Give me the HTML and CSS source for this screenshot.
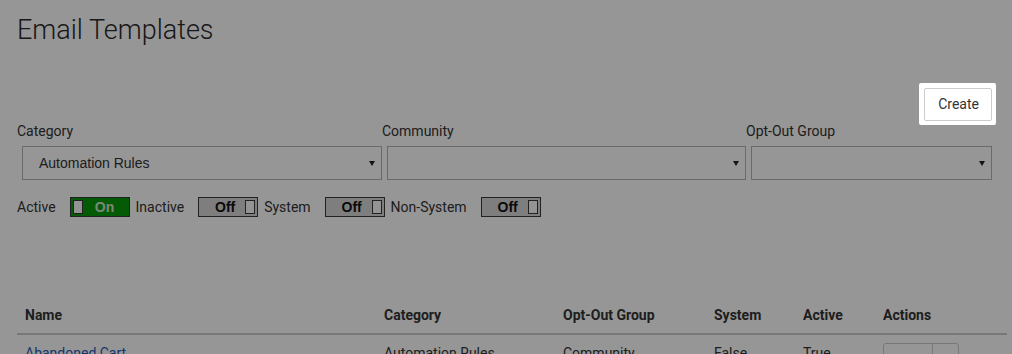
FILE: index.html
```html
<!DOCTYPE html>
<html lang="en">
<head>
<meta charset="utf-8">
<title>Email Templates</title>
<link rel="stylesheet" href="styles.css">
</head>
<body>
<div class="page">
  <h1 class="title">Email Templates</h1>

  <div class="toolbar">
    <div class="spot"><button class="btn" type="button">Create</button></div>
  </div>

  <div class="filters">
    <div class="field">
      <label class="label">Category</label>
      <div class="select"><span class="value">Automation Rules</span><svg class="caret" width="6" height="5" viewBox="0 0 6 5"><path d="M0 0H6L3 5Z"/></svg></div>
    </div>
    <div class="field">
      <label class="label">Community</label>
      <div class="select"><span class="value"></span><svg class="caret" width="6" height="5" viewBox="0 0 6 5"><path d="M0 0H6L3 5Z"/></svg></div>
    </div>
    <div class="field">
      <label class="label">Opt-Out Group</label>
      <div class="select"><span class="value"></span><svg class="caret" width="6" height="5" viewBox="0 0 6 5"><path d="M0 0H6L3 5Z"/></svg></div>
    </div>
  </div>

  <div class="switches">
    <span class="sw-label">Active</span>
    <span class="toggle on"><span class="knob"></span><span class="tx">On</span></span>
    <span class="sw-label">Inactive</span>
    <span class="toggle off"><span class="tx">Off</span><span class="knob"></span></span>
    <span class="sw-label">System</span>
    <span class="toggle off"><span class="tx">Off</span><span class="knob"></span></span>
    <span class="sw-label">Non-System</span>
    <span class="toggle off"><span class="tx">Off</span><span class="knob"></span></span>
  </div>

  <table class="grid">
    <colgroup>
      <col class="c-name"><col class="c-cat"><col class="c-opt"><col class="c-sys"><col class="c-act"><col class="c-actions">
    </colgroup>
    <thead>
      <tr><th>Name</th><th>Category</th><th>Opt-Out Group</th><th>System</th><th>Active</th><th>Actions</th></tr>
    </thead>
    <tbody>
      <tr>
        <td><a class="link" href="#">Abandoned Cart</a></td>
        <td>Automation Rules</td>
        <td>Community</td>
        <td>False</td>
        <td>True</td>
        <td><span class="btn-group"><span class="seg main"></span><span class="seg more"></span></span></td>
      </tr>
    </tbody>
  </table>
</div>
<div class="overlay"></div>
</body>
</html>
```

FILE: styles.css
```css
html, body {
  margin: 0;
  background: #fff;
}
body {
  font-family: Roboto, "Liberation Sans", sans-serif;
  font-size: 14px;
  line-height: 20px;
  color: #333;
  overflow: hidden;
}
.page {
  padding: 0 20px 0 17px;
}
.title {
  margin: 14px 0 0;
  font-size: 27px;
  font-weight: 300;
  line-height: 33px;
  color: #2a2a2a;
}
.toolbar {
  display: flex;
  justify-content: flex-end;
  margin-top: 41px;
}
.spot {
  position: relative;
  z-index: 11;
  background: #fff;
  padding: 5px 4px 4px 5px;
  margin: -5px -4px -4px -5px;
  border-radius: 2px;
}
.btn {
  display: block;
  font-family: Roboto, "Liberation Sans", sans-serif;
  font-size: 14px;
  line-height: 20px;
  color: #333;
  background: #fff;
  border: 1px solid #ccc;
  border-radius: 2px;
  padding: 5px 12px 6px 13px;
  margin: 0;
}
.filters {
  display: grid;
  grid-template-columns: 365px 364px 1fr;
}
.label {
  display: block;
  line-height: 20px;
}
.select {
  display: flex;
  align-items: center;
  height: 34px;
  box-sizing: border-box;
  border: 1px solid #b5b5b5;
  margin: 5px 0 0 5px;
  padding: 0 6px 0 16px;
  font-family: "Liberation Sans", Arial, sans-serif;
  font-size: 14px;
  color: #333;
}
.select .value {
  flex: 1;
}
.caret {
  display: block;
  fill: #222;
}
.switches {
  display: flex;
  align-items: center;
  height: 20px;
  margin-top: 17px;
}
.sw-label {
  margin-right: 14px;
}
.toggle {
  box-sizing: border-box;
  width: 60px;
  height: 20px;
  border: 1px solid #3a3a3a;
  display: flex;
  align-items: center;
  padding: 0 2px;
  margin-right: 6px;
  font-family: "Liberation Sans", Arial, sans-serif;
  font-weight: 700;
  font-size: 14px;
}
.toggle.on {
  background: #0a9a0a;
  color: #d2e6d2;
}
.toggle.off {
  background: #d6d6d6;
  color: #111;
}
.toggle.off .tx {
  padding-left: 4px;
}
.knob {
  box-sizing: border-box;
  width: 10px;
  height: 14px;
  border: 1px solid #3a3a3a;
  background: #fcfcfc;
}
.tx {
  flex: 1;
  text-align: center;
  line-height: 18px;
}
.grid {
  margin-top: 80px;
  width: calc(100% + 15px);
  border-collapse: collapse;
  table-layout: fixed;
}
.c-name { width: 359px; }
.c-cat { width: 179px; }
.c-opt { width: 151px; }
.c-sys { width: 89px; }
.c-act { width: 80px; }
.c-actions { width: 132px; }
.grid th {
  text-align: left;
  font-weight: 700;
  padding: 8px;
  line-height: 20px;
  border-bottom: 2px solid #ccc;
}
.grid td {
  padding: 8px;
  line-height: 20px;
  vertical-align: top;
}
.link {
  color: #2a5db8;
  text-decoration: none;
}
.btn-group {
  display: inline-flex;
  border: 1px solid #ccc;
  border-radius: 3px;
  height: 30px;
  box-sizing: border-box;
}
.seg.main {
  width: 48px;
  border-right: 1px solid #ccc;
}
.seg.more {
  width: 25px;
}
.overlay {
  position: fixed;
  inset: 0;
  background: rgba(0, 0, 0, 0.41);
  z-index: 10;
}
```
